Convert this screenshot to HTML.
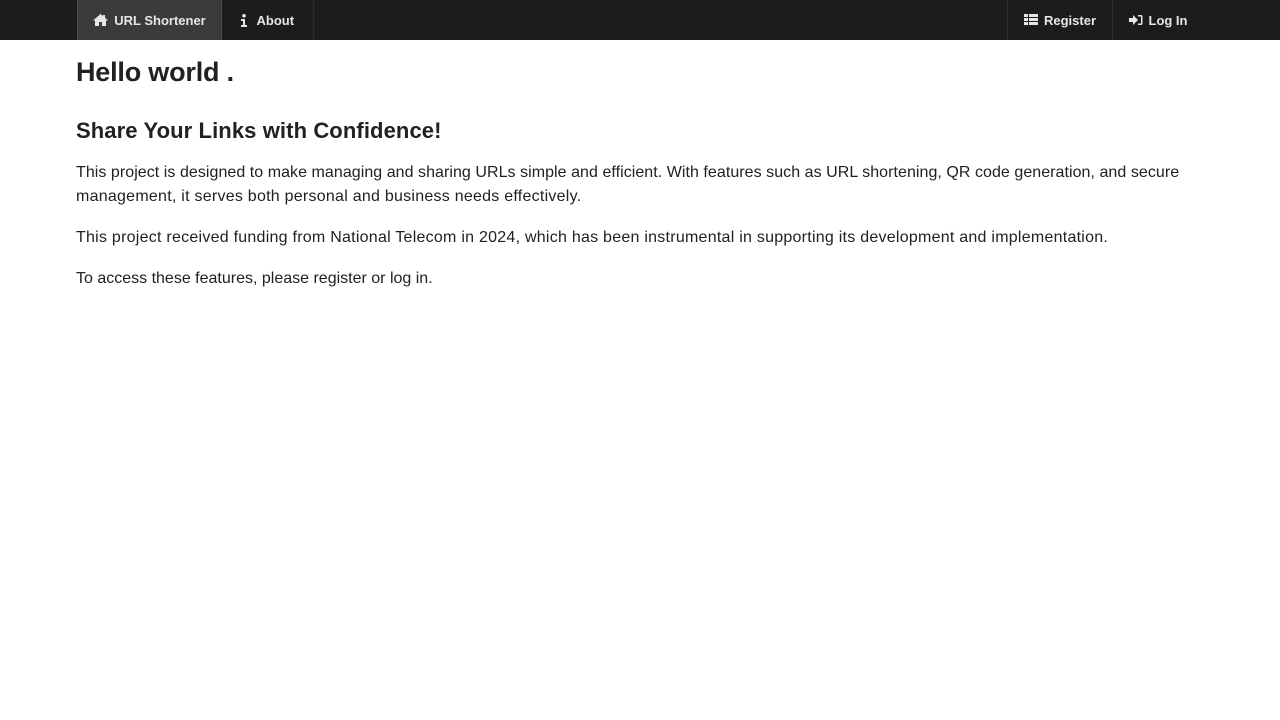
<!DOCTYPE html>
<html><head><meta charset="utf-8"><style>
*{box-sizing:border-box}
body{margin:0;background:#fff;font-family:"Liberation Sans",sans-serif;color:#212121}
.nav{position:absolute;left:0;top:0;width:1280px;height:40px;background:#1b1c1d}
.it{position:absolute;top:0;height:40px;display:flex;align-items:center;justify-content:center;gap:6px;color:#e6e6e6;font-size:13px;font-weight:bold;border-right:1px solid rgba(255,255,255,.08)}
.it svg{fill:#e6e6e6}
.h1{position:absolute;left:76px;top:57px;font-size:27px;font-weight:bold;margin:0;letter-spacing:-.2px}
.h2{position:absolute;left:76px;top:118px;font-size:22px;font-weight:bold;margin:0;letter-spacing:.1px}
.p{position:absolute;left:76px;width:1200px;white-space:nowrap;font-size:16px;line-height:24px;margin:0;letter-spacing:.25px}
</style></head><body>
<div class="nav">
<div class="it" style="left:77px;width:145px;background:#3a3b3c;border-left:1px solid rgba(255,255,255,.08)"><svg width="15" height="12" viewBox="0 0 15 12"><path d="M7.5 0L0 6.5h2V12h4V8h3v4h4V6.5h2L12 3.5V1h-2v1z"/></svg>URL Shortener</div>
<div class="it" style="left:222px;width:92px"><svg width="6" height="13" viewBox="0 0 6 13"><circle cx="3" cy="1.8" r="1.8"/><path d="M0 5h4v6h2v2H0v-2h2V7H0z"/></svg>&nbsp;About</div>
<div class="it" style="left:1007px;width:106px;border-left:1px solid rgba(255,255,255,.08)"><svg width="14" height="12" viewBox="0 0 14 12"><path d="M0 0h4v3H0zM5 0h9v3H5zM0 4h4v3H0zM5 4h9v3H5zM0 8h4v3H0zM5 8h9v3H5z"/></svg>Register</div>
<div class="it" style="left:1113px;width:90px;border-right:none"><svg width="14" height="12" viewBox="0 0 14 12"><path d="M0 4h4V1l5 5-5 5V8H0z"/><path d="M9 1h3a1.5 1.5 0 0 1 1.5 1.5v7A1.5 1.5 0 0 1 12 11H9V9.5h3v-7H9z"/></svg>Log In</div>
</div>
<h1 class="h1">Hello world .</h1>
<h2 class="h2">Share Your Links with Confidence!</h2>
<p class="p" style="top:161px"><span style="letter-spacing:.05px">This project is designed to make managing and sharing URLs simple and efficient. With features such as URL shortening, QR code generation, and secure</span><br>management, it serves both personal and business needs effectively.</p>
<p class="p" style="top:226px">This project received funding from National Telecom in 2024, which has been instrumental in supporting its development and implementation.</p>
<p class="p" style="top:267px;letter-spacing:0">To access these features, please register or log in.</p>
</body></html>
